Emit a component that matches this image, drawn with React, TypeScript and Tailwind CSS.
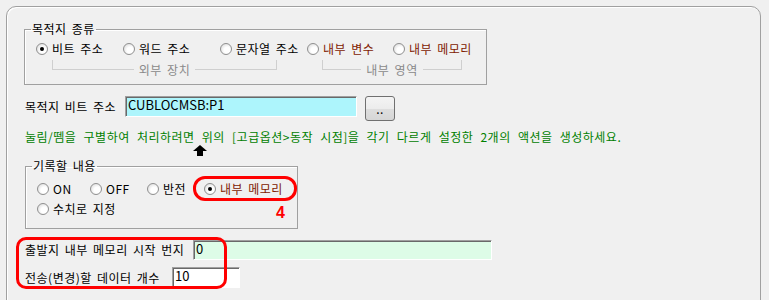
import type { ReactNode } from "react";

const Radio = ({ checked = false }: { checked?: boolean }) => (
  <span className="flex h-[12px] w-[12px] shrink-0 items-center justify-center rounded-full border border-[#8f8f8f] bg-[radial-gradient(circle_at_62%_62%,#ffffff_35%,#d2d2d2_100%)]">
    {checked && <span className="h-[4px] w-[4px] rounded-full bg-black" />}
  </span>
);

const RadioItem = ({
  label,
  checked,
  className = "",
  textClass = "text-black",
}: {
  label: string;
  checked?: boolean;
  className?: string;
  textClass?: string;
}) => (
  <label className={`flex h-[14px] items-center gap-[4px] ${className}`}>
    <Radio checked={checked} />
    <span className={`whitespace-nowrap leading-[14px] ${textClass}`}>{label}</span>
  </label>
);

const Bracket = ({ label, className = "" }: { label: string; className?: string }) => (
  <div className={`flex h-[16px] ${className}`}>
    <div className="h-[10px] flex-1 border-b border-l border-[#cfcfcf]" />
    <span className="mt-[4px] px-[5px] leading-[12px] text-[#8a8a8a]">{label}</span>
    <div className="h-[10px] flex-1 border-b border-r border-[#cfcfcf]" />
  </div>
);

const Field = ({ value, className }: { value: string; className: string }) => (
  <div
    className={`border-t border-l border-b border-r border-t-[#a0a0a0] border-l-[#a0a0a0] border-b-white border-r-white pl-[2px] text-[13px] leading-[15px] tracking-normal text-black shadow-[inset_1px_1px_0_#696969] ${className}`}
  >
    {value}
  </div>
);

const Group = ({ title, className, children }: { title: string; className: string; children: ReactNode }) => (
  <fieldset className={`border border-[#a0a0a0] shadow-[inset_1px_1px_0_#ffffff] ${className}`}>
    <legend className="ml-[6px] px-[1px] leading-[14px]">{title}</legend>
    {children}
  </fieldset>
);

export default function App() {
  return (
    <div className="h-[300px] w-[769px] overflow-hidden bg-[#f0f0f0] pl-[6px] pt-[6px] font-['Noto_Sans_CJK_KR',sans-serif] text-[12px] tracking-[0.5px] text-black [word-spacing:2px]">
      <div className="h-[320px] w-[755px] rounded-t-[10px] border border-[#a0a0a0] pl-[17px] pt-[15px] shadow-[inset_1px_1px_0_#ffffff]">
        {/* 목적지 종류 */}
        <Group title="목적지 종류" className="w-[463px] pb-[8px]">
          <div className="mt-[6px] flex pl-[11px]">
            <RadioItem label="비트 주소" checked className="w-[87px]" />
            <RadioItem label="워드 주소" className="w-[97px]" />
            <RadioItem label="문자열 주소" className="w-[87px]" />
            <RadioItem label="내부 변수" className="w-[86px]" textClass="text-[#802000]" />
            <RadioItem label="내부 메모리" textClass="text-[#802000]" />
          </div>
          <div className="mt-[4px] flex pl-[27px]">
            <Bracket label="외부 장치" className="w-[225px]" />
            <Bracket label="내부 영역" className="ml-[45px] w-[140px]" />
          </div>
        </Group>

        {/* 목적지 비트 주소 */}
        <div className="mt-[11px] flex items-start">
          <span className="h-[21px] w-[101px] whitespace-nowrap pl-[1px] leading-[21px]">목적지 비트 주소</span>
          <Field value="CUBLOCMSB:P1" className="h-[21px] w-[232px] bg-[#adf5fc]" />
          <button className="ml-[8px] flex h-[25px] w-[30px] items-center justify-center rounded-[3px] border border-[#707070] bg-[linear-gradient(#f4f4f4_0%,#ececec_50%,#dedede_51%,#d6d6d6_100%)] leading-[14px]">
            ..
          </button>
        </div>

        <p className="mt-[9px] whitespace-nowrap pl-[1px] leading-[14px] text-[#008000] [word-spacing:4px]">
          눌림/뗌을 구별하여 처리하려면 위의 [고급옵션&gt;동작 시점]을 각기 다르게 설정한 2개의 액션을 생성하세요.
        </p>

        <svg className="ml-[169px] mt-[1px] block" width="14" height="11" viewBox="0 0 14 11">
          <polygon points="7,0 0,6 14,6" fill="#000" />
          <rect x="4" y="6" width="6" height="5" fill="#000" />
        </svg>

        {/* 기록할 내용 */}
        <div className="relative ml-[1px] mt-[3px] w-[273px]">
          <Group title="기록할 내용" className="w-[273px] pb-[12px]">
            <div className="mt-[9px] flex pl-[11px]">
              <RadioItem label="ON" className="w-[53px]" />
              <RadioItem label="OFF" className="w-[57px]" />
              <RadioItem label="반전" className="w-[57px]" />
              <RadioItem label="내부 메모리" checked textClass="text-[#802000]" />
            </div>
            <div className="mt-[6px] flex pl-[11px]">
              <RadioItem label="수치로 지정" />
            </div>
          </Group>
          <div className="absolute left-[168px] top-[17px] h-[25px] w-[104px] rounded-[12px] border-[3px] border-[#ff0000]" />
          <span className="absolute left-[251px] top-[46px] font-['Liberation_Sans',sans-serif] text-[16px] font-bold leading-[16px] tracking-normal text-[#ff0000]">
            4
          </span>
        </div>

        {/* 출발지 / 개수 */}
        <div className="relative mt-[11px]">
          <div className="flex items-start">
            <span className="h-[20px] w-[169px] whitespace-nowrap pl-[1px] leading-[20px]">출발지 내부 메모리 시작 번지</span>
            <Field value="0" className="h-[20px] w-[299px] bg-[#ddfce7]" />
          </div>
          <div className="mt-[7px] flex items-start">
            <span className="h-[21px] w-[148px] whitespace-nowrap pl-[1px] leading-[21px]">전송(변경)할 데이터 개수</span>
            <Field value="10" className="h-[21px] w-[68px] bg-white" />
          </div>
          <div className="absolute left-[-8px] top-[-3px] h-[52px] w-[211px] rounded-[10px] border-[3px] border-[#ff0000]" />
        </div>
      </div>
    </div>
  );
}
